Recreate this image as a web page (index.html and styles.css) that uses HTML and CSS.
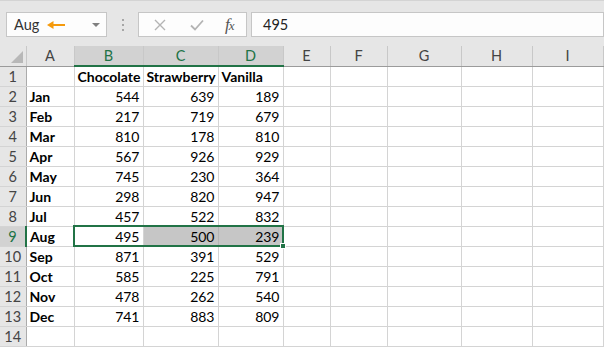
FILE: index.html
```html
<!DOCTYPE html>
<html lang="en">
<head>
<meta charset="UTF-8">
<title>Sheet</title>
<link rel="stylesheet" href="styles.css">
</head>
<body>
<div class="toolbar">
	<div class="namebox">
		<span class="name">Aug</span>
		<svg class="arrow" width="18" height="10" viewBox="0 0 18 10"><path d="M3 5 H18" stroke="#f59a0c" stroke-width="2"/><path d="M0 5 L6.5 1 L6.5 9 Z" fill="#f59a0c"/></svg>
		<span class="drop"></span>
	</div>
	<div class="dots"><i></i><i></i><i></i></div>
	<div class="fbtns">
		<svg width="12" height="12" viewBox="0 0 12 12"><path d="M1 1 L11 11 M11 1 L1 11" stroke="#b4b4b4" stroke-width="1.4"/></svg>
		<svg width="14" height="12" viewBox="0 0 14 12"><path d="M1 6.5 L5 10.5 L13 1.5" stroke="#b4b4b4" stroke-width="1.8" fill="none"/></svg>
		<span class="fx">f<small>x</small></span>
	</div>
	<div class="fvalue">495</div>
</div>

<div class="sheet">
	<table class="grid">
		<colgroup>
			<col style="width:26px"><col style="width:48px"><col style="width:69px"><col style="width:75px"><col style="width:65px"><col style="width:47px"><col style="width:57px"><col style="width:74px"><col style="width:71px"><col style="width:71px">
		</colgroup>
		<tr class="hdr">
			<th class="corner"><span class="tri"></span></th>
			<th>A</th><th class="on">B</th><th class="on">C</th><th class="on">D</th><th>E</th><th>F</th><th>G</th><th>H</th><th>I</th>
		</tr>
		<tr><th class="rn">1</th><td></td><td class="b">Chocolate</td><td class="b">Strawberry</td><td class="b">Vanilla</td><td></td><td></td><td></td><td></td><td></td></tr>
		<tr><th class="rn">2</th><td class="b">Jan</td><td class="n">544</td><td class="n">639</td><td class="n">189</td><td></td><td></td><td></td><td></td><td></td></tr>
		<tr><th class="rn">3</th><td class="b">Feb</td><td class="n">217</td><td class="n">719</td><td class="n">679</td><td></td><td></td><td></td><td></td><td></td></tr>
		<tr><th class="rn">4</th><td class="b">Mar</td><td class="n">810</td><td class="n">178</td><td class="n">810</td><td></td><td></td><td></td><td></td><td></td></tr>
		<tr><th class="rn">5</th><td class="b">Apr</td><td class="n">567</td><td class="n">926</td><td class="n">929</td><td></td><td></td><td></td><td></td><td></td></tr>
		<tr><th class="rn">6</th><td class="b">May</td><td class="n">745</td><td class="n">230</td><td class="n">364</td><td></td><td></td><td></td><td></td><td></td></tr>
		<tr><th class="rn">7</th><td class="b">Jun</td><td class="n">298</td><td class="n">820</td><td class="n">947</td><td></td><td></td><td></td><td></td><td></td></tr>
		<tr><th class="rn">8</th><td class="b">Jul</td><td class="n">457</td><td class="n">522</td><td class="n">832</td><td></td><td></td><td></td><td></td><td></td></tr>
		<tr><th class="rn on">9</th><td class="b">Aug</td><td class="n">495</td><td class="n sel">500</td><td class="n sel">239</td><td></td><td></td><td></td><td></td><td></td></tr>
		<tr><th class="rn">10</th><td class="b">Sep</td><td class="n">871</td><td class="n">391</td><td class="n">529</td><td></td><td></td><td></td><td></td><td></td></tr>
		<tr><th class="rn">11</th><td class="b">Oct</td><td class="n">585</td><td class="n">225</td><td class="n">791</td><td></td><td></td><td></td><td></td><td></td></tr>
		<tr><th class="rn">12</th><td class="b">Nov</td><td class="n">478</td><td class="n">262</td><td class="n">540</td><td></td><td></td><td></td><td></td><td></td></tr>
		<tr><th class="rn">13</th><td class="b">Dec</td><td class="n">741</td><td class="n">883</td><td class="n">809</td><td></td><td></td><td></td><td></td><td></td></tr>
		<tr><th class="rn">14</th><td></td><td></td><td></td><td></td><td></td><td></td><td></td><td></td><td></td></tr>
	</table>
	<div class="selbox"><span class="handle"></span></div>
</div>
</body>
</html>
```

FILE: styles.css
```css
* { margin: 0; padding: 0; box-sizing: border-box; }
html, body { height: 100%; overflow: hidden; }
body { background: #e6e6e6; font-family: Lato, "Liberation Sans", sans-serif; font-size: 14px; color: #000; }

.toolbar { height: 46px; display: flex; align-items: flex-start; padding: 11px 0 0 6px; border-top: 1px solid #d4d4d4; }
.namebox { width: 101px; height: 25px; background: #fdfdfd; border: 1px solid #c6c6c6; display: flex; align-items: center; padding-left: 7px; position: relative; }
.name { color: #333; font-size: 14.5px; }
.arrow { margin-left: 8px; margin-top: 1px; }
.drop { position: absolute; right: 6px; top: 10px; border-left: 4px solid transparent; border-right: 4px solid transparent; border-top: 4px solid #808080; }
.dots { width: 31px; height: 25px; display: flex; flex-direction: column; align-items: center; justify-content: center; gap: 3px; }
.dots i { width: 2px; height: 2px; background: #a6a6a6; display: block; }
.fbtns { width: 109px; height: 25px; background: #fdfdfd; border: 1px solid #c6c6c6; display: flex; align-items: center; padding-left: 15px; }
.fbtns svg:first-child { margin-right: 24px; }
.fbtns svg:nth-child(2) { margin-right: 21px; }
.fx { font-family: "Liberation Serif", serif; font-style: italic; font-size: 17px; color: #555; letter-spacing: -1px; }
.fx small { font-size: 13px; }
.fvalue { flex: 1; height: 25px; margin-left: 4px; background: #fdfdfd; border: 1px solid #c6c6c6; padding-left: 11px; line-height: 23px; color: #222; font-size: 14.5px; }

.sheet { position: relative; background: #fff; }
.grid { border-collapse: collapse; table-layout: fixed; width: 603px; }
.grid tr { height: 20px; }
.grid td { border-right: 1px solid #d4d4d4; border-bottom: 1px solid #d4d4d4; padding: 0 3px; white-space: nowrap; overflow: hidden; line-height: 19px; background: #fff; }
.grid td.b { font-weight: bold; }
.grid td.n { text-align: right; }
.grid td.sel { background: #c6c6c6; border-right-color: #b4b4b4; }

.hdr th { background: #e6e6e6; font-weight: normal; color: #444; border-right: 1px solid #c8c8c8; border-bottom: 1px solid #9b9b9b; height: 20px; line-height: 19px; font-size: 14.5px; }
.hdr th.on { background: #d2d2d2; color: #217346; border-bottom: 2px solid #217346; }
.corner { position: relative; }
.tri { position: absolute; right: 3px; bottom: 3px; border-left: 12px solid transparent; border-bottom: 12px solid #b8b8b8; }
.rn { background: #e6e6e6; font-weight: normal; color: #444; text-align: center; border-right: 1px solid #ababab; border-bottom: 1px solid #d4d4d4; line-height: 19px; font-size: 14.5px; }
.rn.on { background: #d2d2d2; color: #217346; border-right: 2px solid #217346; }

.selbox { position: absolute; left: 73px; top: 179px; width: 211px; height: 22px; border: 2px solid #217346; }
.handle { position: absolute; right: -4px; bottom: -4px; width: 6px; height: 6px; background: #217346; border: 1px solid #fff; }
```
